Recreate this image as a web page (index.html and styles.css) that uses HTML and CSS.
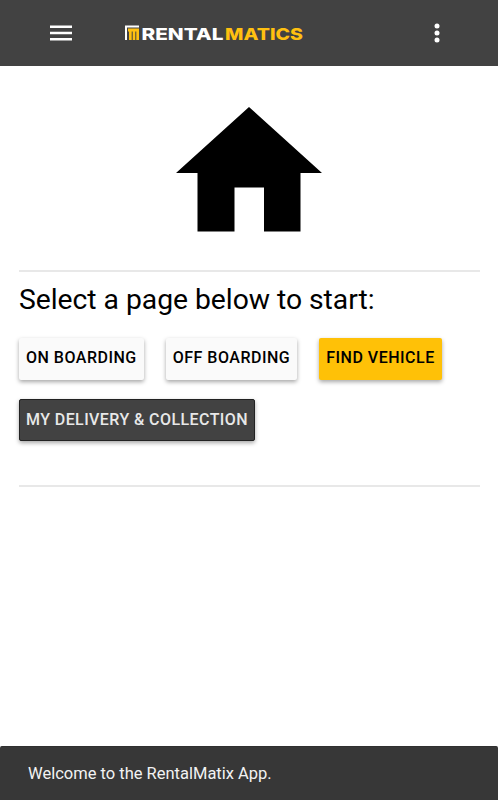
FILE: index.html
```html
<!DOCTYPE html>
<html lang="en">

<head>
    <meta charset="UTF-8">
    <meta name="viewport" content="width=device-width, initial-scale=1.0">
    <title>RentalMatics</title>
    <link rel="stylesheet" href="styles.css">
</head>

<body>
    <header class="toolbar">
        <button class="icon-btn" aria-label="Menu">
            <svg width="22" height="16" viewBox="0 0 22 16">
                <path fill="#fff" d="M0 .5h22v2.400H0zM0 6.800h22v2.400H0zM0 13h22v2.400H0z" />
            </svg>
        </button>
        <svg class="logo" width="180" height="20" viewBox="0 0 180 20">
            <path class="logo-roof" d="M1 17V2.500h14v2H3V17z" />
            <path class="logo-mark" d="M4 5.500h11V17h-2.700V8.500h-1V17H8.700V8.500h-1V17H5V8.500H4z" />
            <text class="logo-white" x="17.500" y="17" textLength="82" lengthAdjust="spacingAndGlyphs">RENTAL</text>
            <text class="logo-yellow" x="101" y="17" textLength="78" lengthAdjust="spacingAndGlyphs">MATICS</text>
        </svg>
        <button class="icon-btn more" aria-label="More">
            <svg width="6" height="20" viewBox="0 0 6 20">
                <circle cx="3" cy="3" r="2.500" fill="#fff" />
                <circle cx="3" cy="10" r="2.500" fill="#fff" />
                <circle cx="3" cy="17" r="2.500" fill="#fff" />
            </svg>
        </button>
    </header>

    <main class="content">
        <svg class="home-icon" width="146" height="125" viewBox="0 0 146 125">
            <path d="M73 0l73 66h-21.500v58.500H88V80.500H58.500v44H21.500V66H0z" />
        </svg>
        <hr>
        <h1>Select a page below to start:</h1>
        <div class="buttons">
            <button class="btn">ON BOARDING</button>
            <button class="btn">OFF BOARDING</button>
            <button class="btn btn-warning">FIND VEHICLE</button>
            <button class="btn btn-dark">MY DELIVERY &amp; COLLECTION</button>
        </div>
        <hr>
    </main>

    <footer class="toast">Welcome to the RentalMatix App.</footer>
</body>

</html>
```
FILE: styles.css
```css
* {
    margin: 0;
    padding: 0;
    box-sizing: border-box;
}

body {
    font-family: Roboto, sans-serif;
    background: #fff;
    color: #000;
    height: 100vh;
    display: flex;
    flex-direction: column;
    overflow: hidden;
}

button {
    border: none;
    font-family: inherit;
    cursor: pointer;
}

svg {
    display: block;
}

.toolbar {
    height: 66px;
    background: #424242;
    display: flex;
    align-items: center;
    padding: 0 58px 0 50px;
}

.icon-btn {
    background: none;
}

.logo {
    margin-left: 52px;
    font-family: Inter, sans-serif;
    font-size: 16.5px;
    font-weight: 800;
}

.logo-white,
.logo-roof {
    fill: #fff;
}

.logo-yellow,
.logo-mark {
    fill: #ffc010;
}

.more {
    margin-left: auto;
}

.content {
    flex: 1;
    padding: 41px 18px 0 19px;
}

.home-icon {
    margin: 0 auto 38px 157px;
}

hr {
    border: none;
    height: 2px;
    background: #e8e8e8;
}

h1 {
    font-size: 28.3px;
    font-weight: 400;
    letter-spacing: -0.03px;
    line-height: 34px;
    margin: 11px 0 21px;
}

.buttons {
    display: flex;
    flex-wrap: wrap;
    gap: 19px 22px;
    margin-bottom: 44px;
}

.btn {
    height: 42px;
    padding: 0 7px 3px;
    border-radius: 2px;
    background: #fafafa;
    color: #000;
    font-size: 16px;
    font-weight: 500;
    letter-spacing: 0.5px;
    box-shadow: 0 2px 4px rgba(0, 0, 0, 0.35);
}

.btn-warning {
    background: #ffc107;
}

.btn-dark {
    background: #424242;
    color: #e8e8e8;
    border: 1px solid #222;
    padding: 0 6px 2px;
    letter-spacing: 0.42px;
}

.toast {
    height: 54px;
    background: #373737;
    border-top: 1px solid #303030;
    border-radius: 2px 2px 0 0;
    color: #f2f2f2;
    font-size: 16.5px;
    line-height: 54px;
    padding-left: 28px;
}
```
